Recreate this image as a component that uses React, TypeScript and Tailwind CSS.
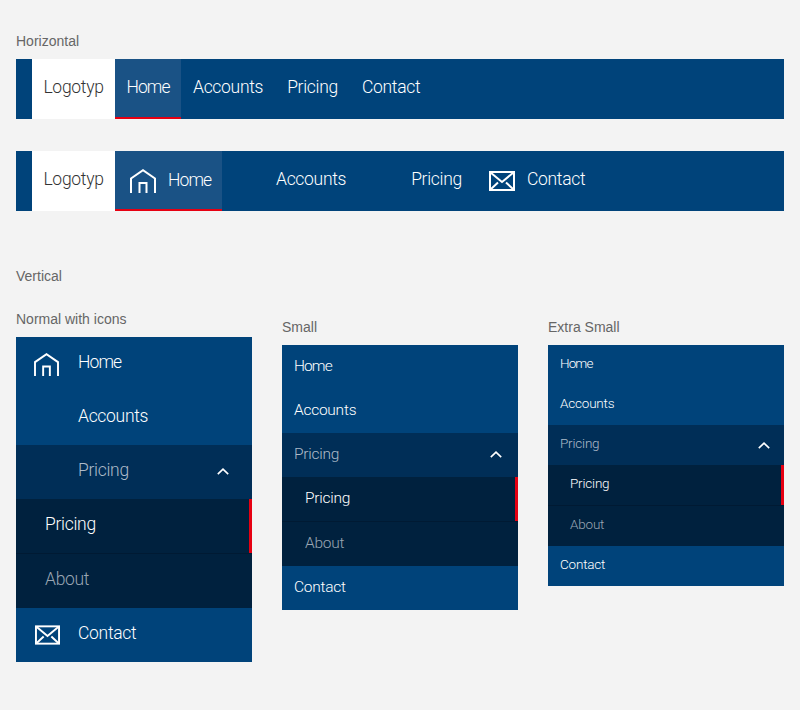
const font = "font-['Roboto',sans-serif]";

function HomeIcon({ className }: { className: string }) {
  return (
    <svg viewBox="0 0 26 24" className={className} fill="none" stroke="#fff" strokeWidth="2">
      <path d="M1 24V9.5L13 1.2 25 9.5V24" />
      <path d="M9.5 24V14H16.5V24" />
    </svg>
  );
}

function MailIcon({ className }: { className: string }) {
  return (
    <svg viewBox="0 0 26 20" className={className} fill="none" stroke="#fff" strokeWidth="2">
      <rect x="1" y="1" width="24" height="18" />
      <path d="M1.5 1.5 13 11 24.5 1.5" />
      <path d="M1.5 18.5 9 11.5M24.5 18.5 17 11.5" />
    </svg>
  );
}

function Chevron({ className }: { className: string }) {
  return (
    <svg viewBox="0 0 12 7" className={className} fill="none" stroke="#fff" strokeWidth="1.6">
      <path d="M.8 6.2 6 1.2l5.2 5" />
    </svg>
  );
}

function Label({ children, className = "" }: { children: string; className?: string }) {
  return <div className={`font-['Liberation_Sans',sans-serif] text-sm leading-4 text-[#666] ${className}`}>{children}</div>;
}

function HorizontalBar({ icons }: { icons?: boolean }) {
  return (
    <div className={`flex h-[60px] w-full bg-[#00437a] pl-4 text-white ${font} text-[17.5px] font-[350] tracking-[-0.3px]`}>
      <div className="flex w-[83px] items-center justify-center bg-white pb-[3px] text-[#333]">Logotyp</div>
      {icons ? (
        <>
          <div className="flex w-[107px] items-center border-b-2 border-[#e60012] bg-[#1a5285] pl-[15px]">
            <HomeIcon className="mt-[2px] h-6 w-[26px]" />
            <span className="ml-[12px] tracking-[-0.9px]">Home</span>
          </div>
          <div className="ml-[54px] flex items-center pb-[3px]">Accounts</div>
          <div className="ml-[65px] flex items-center pb-[3px]">Pricing</div>
          <div className="ml-[27px] flex items-center">
            <MailIcon className="h-5 w-[26px]" />
            <span className="ml-[12px] mb-[3px]">Contact</span>
          </div>
        </>
      ) : (
        <>
          <div className="flex w-[66px] items-center justify-center border-b-2 border-[#e60012] bg-[#1a5285] pb-[2px] tracking-[-0.9px]">Home</div>
          <div className="ml-3 flex items-center pb-[3px]">Accounts</div>
          <div className="ml-6 flex items-center pb-[3px]">Pricing</div>
          <div className="ml-6 flex items-center pb-[3px]">Contact</div>
        </>
      )}
    </div>
  );
}

type Size = { row: string; text: string; pad: string; sub: string; chevMr: string; shift: string; chevShift: string };

function VerticalMenu({ size, icons }: { size: Size; icons?: boolean }) {
  const row = `flex items-center ${size.row}`;
  return (
    <div className={`w-full bg-[#00437a] text-white ${font} font-[350] ${size.text}`}>
      <div className={`${row} ${size.pad}`}>
        {icons && <HomeIcon className="mx-[18px] mt-px h-[23px] w-[25px]" />}
        <span className={`${size.shift} tracking-[-0.9px] ${icons ? "ml-px" : ""}`}>Home</span>
      </div>
      <div className={`${row} ${size.pad}`}>
        {icons && <span className="mx-[18px] w-[26px]" />}
        <span className={size.shift}>Accounts</span>
      </div>
      <div className={`${row} ${size.pad} justify-between bg-[#002e57] text-[#aebbc9]`}>
        <span className={`${size.shift} flex`}>
          {icons && <span className="mx-[18px] w-[26px]" />}
          Pricing
        </span>
        <Chevron className={`h-[7px] w-3 ${size.chevMr} ${size.chevShift}`} />
      </div>
      <div className={`${row} ${size.sub} justify-between bg-[#00213e]`}>
        <span className={size.shift}>Pricing</span>
        <span className="h-full w-[3px] bg-[#e60012]" />
      </div>
      <div className={`${row} ${size.sub} box-content border-t border-[#001a33] bg-[#00213e] text-[#9aa6b3]`}>
        <span className={size.shift}>About</span>
      </div>
      <div className={`${row} ${size.pad}`}>
        {icons && <MailIcon className="mx-[18px] ml-[19px] h-5 w-[25px]" />}
        <span className={size.shift}>Contact</span>
      </div>
    </div>
  );
}

const normal: Size = { row: "h-[54px]", text: "text-[17.5px] tracking-[-0.3px]", pad: "", sub: "pl-[29px]", chevMr: "mr-[23px]", shift: "-mt-[3px]", chevShift: "-mt-[2px]" };
const small: Size = { row: "h-11", text: "text-[15.5px] tracking-[-0.25px]", pad: "pl-3", sub: "pl-[23px]", chevMr: "mr-[16px]", shift: "-mt-px", chevShift: "-mt-[2px]" };
const xs: Size = { row: "h-10", text: "text-[13.5px] tracking-[-0.2px]", pad: "pl-3", sub: "pl-[22px]", chevMr: "mr-[14px]", shift: "-mt-[3px]", chevShift: "" };

export default function App() {
  return (
    <div className="h-[710px] w-[800px] overflow-hidden bg-[#f3f3f3] px-4 pt-[33px]">
      <Label className="mb-[10px]">Horizontal</Label>
      <HorizontalBar />
      <div className="mt-8">
        <HorizontalBar icons />
      </div>
      <Label className="mt-[57px]">Vertical</Label>
      <div className="mt-[27px] grid grid-cols-3 items-start gap-[30px]">
        <div>
          <Label className="mb-[10px]">Normal with icons</Label>
          <VerticalMenu size={normal} icons />
        </div>
        <div className="mt-2">
          <Label className="mb-[10px]">Small</Label>
          <VerticalMenu size={small} />
        </div>
        <div className="mt-2">
          <Label className="mb-[10px]">Extra Small</Label>
          <VerticalMenu size={xs} />
        </div>
      </div>
    </div>
  );
}
